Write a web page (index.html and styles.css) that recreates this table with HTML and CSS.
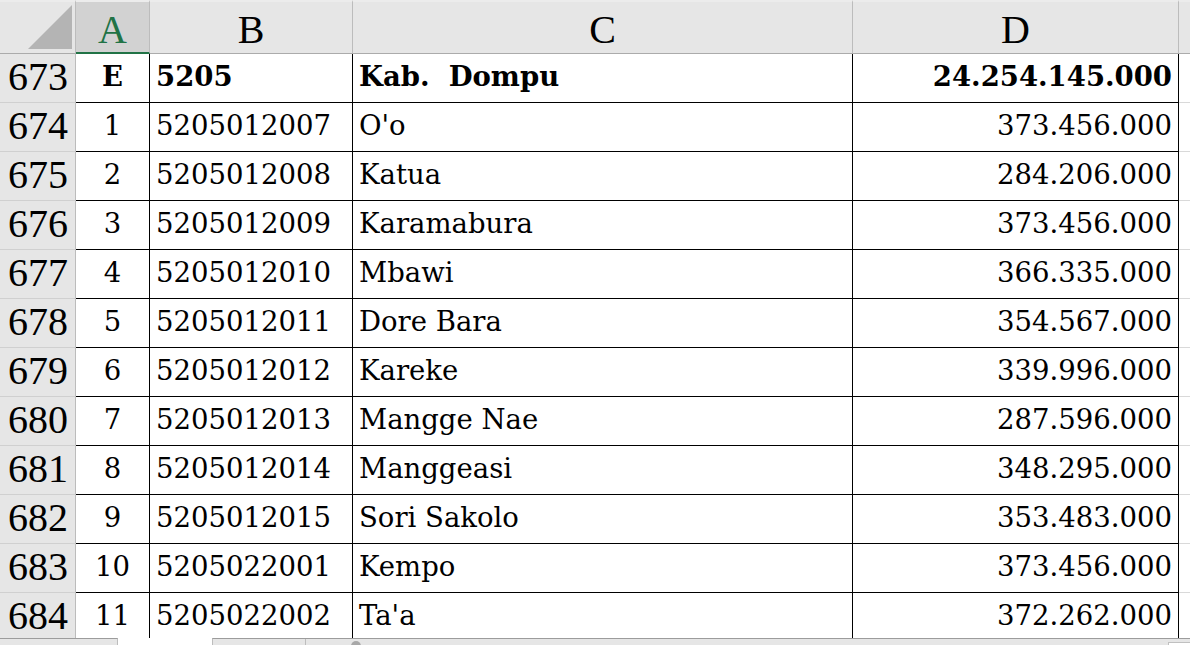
FILE: index.html
```html
<!DOCTYPE html>
<html>
<head>
<meta charset="utf-8">
<link rel="stylesheet" href="styles.css">
</head>
<body>
<div class="sheet">
  <div class="grid">
    <div class="hd corner"><span class="tri"></span></div>
    <div class="hd col sel">A</div>
    <div class="hd col">B</div>
    <div class="hd col">C</div>
    <div class="hd col">D</div>
    <div class="hd col rest"></div>

    <div class="rn">673</div>
    <div class="c ctr b">E</div>
    <div class="c b">5205</div>
    <div class="c b">Kab.&nbsp; Dompu</div>
    <div class="c r b">24.254.145.000</div>
    <div class="c x"></div>

    <div class="rn">674</div><div class="c ctr">1</div><div class="c">5205012007</div><div class="c">O'o</div><div class="c r">373.456.000</div><div class="c x"></div>
    <div class="rn">675</div><div class="c ctr">2</div><div class="c">5205012008</div><div class="c">Katua</div><div class="c r">284.206.000</div><div class="c x"></div>
    <div class="rn">676</div><div class="c ctr">3</div><div class="c">5205012009</div><div class="c">Karamabura</div><div class="c r">373.456.000</div><div class="c x"></div>
    <div class="rn">677</div><div class="c ctr">4</div><div class="c">5205012010</div><div class="c">Mbawi</div><div class="c r">366.335.000</div><div class="c x"></div>
    <div class="rn">678</div><div class="c ctr">5</div><div class="c">5205012011</div><div class="c">Dore Bara</div><div class="c r">354.567.000</div><div class="c x"></div>
    <div class="rn">679</div><div class="c ctr">6</div><div class="c">5205012012</div><div class="c">Kareke</div><div class="c r">339.996.000</div><div class="c x"></div>
    <div class="rn">680</div><div class="c ctr">7</div><div class="c">5205012013</div><div class="c">Mangge Nae</div><div class="c r">287.596.000</div><div class="c x"></div>
    <div class="rn">681</div><div class="c ctr">8</div><div class="c">5205012014</div><div class="c">Manggeasi</div><div class="c r">348.295.000</div><div class="c x"></div>
    <div class="rn">682</div><div class="c ctr">9</div><div class="c">5205012015</div><div class="c">Sori Sakolo</div><div class="c r">353.483.000</div><div class="c x"></div>
    <div class="rn">683</div><div class="c ctr">10</div><div class="c">5205022001</div><div class="c">Kempo</div><div class="c r">373.456.000</div><div class="c x"></div>
    <div class="rn">684</div><div class="c ctr">11</div><div class="c">5205022002</div><div class="c">Ta'a</div><div class="c r">372.262.000</div><div class="c x"></div>
  </div>
  <div class="bar">
    <div class="tabbox first"></div>
    <div class="gap"></div>
    <div class="tabbox second"><span class="div"></span><span class="dot"></span></div>
    <div class="tabbox end"></div>
  </div>
</div>
</body>
</html>
```

FILE: styles.css
```css
* { box-sizing: border-box; }
html, body { margin: 0; padding: 0; background: #fff; }
.sheet {
  width: 1190px;
  height: 645px;
  overflow: hidden;
  display: flex;
  flex-direction: column;
}
.grid {
  height: 638px;
  overflow: hidden;
  display: grid;
  grid-template-columns: 76px 74px 203px 500px 326px 1fr;
  grid-template-rows: 54px repeat(12, 49px);
  font-family: "DejaVu Serif", serif;
  font-size: 27.5px;
  color: #000;
}
.hd {
  background: #e6e6e6;
  border-bottom: 1px solid #ababab;
  border-top: 2px solid #ececec;
  font-family: "Liberation Serif", serif;
  font-size: 40px;
  display: flex;
  align-items: center;
  justify-content: center;
  padding-top: 4px;
  position: relative;
}
.col { border-right: 1px solid #bcbcbc; }
.corner { border-right: 1px solid #bcbcbc; }
.tri {
  position: absolute;
  left: 28px;
  bottom: 4px;
  width: 0;
  height: 0;
  border-left: 44px solid transparent;
  border-bottom: 44px solid #b4b4b4;
}
.sel {
  background: #d2d2d2;
  color: #217346;
  border-bottom: 2px solid #217346;
}
.rest { border-right: none; }
.rn {
  background: #e6e6e6;
  border-right: 1px solid #bcbcbc;
  border-bottom: 1px solid #d0d0d0;
  font-family: "Liberation Serif", serif;
  font-size: 40px;
  display: flex;
  align-items: center;
  justify-content: flex-end;
  padding-right: 7px;
  padding-bottom: 3px;
}
.c {
  border-right: 1px solid #000;
  border-bottom: 1px solid #000;
  display: flex;
  align-items: center;
  padding: 0 6px 5px 6px;
  white-space: nowrap;
}
.ctr { justify-content: center; }
.r { justify-content: flex-end; }
.b { font-weight: bold; }
.x {
  border-right: none;
  border-bottom: 1px solid #d9d9d9;
}
.bar {
  height: 7px;
  display: flex;
  background: #fff;
}
.tabbox {
  background: #e6e6e6;
  border-top: 1px solid #9c9c9c;
  height: 7px;
  position: relative;
}
.first { width: 118px; border-right: 1px solid #bdbdbd; }
.gap { width: 94px; background: #fff; }
.second {
  flex: 1;
  border-left: 1px solid #bdbdbd;
}
.second .div {
  position: absolute;
  left: 92px;
  top: 0;
  width: 1px;
  height: 7px;
  background: #bdbdbd;
}
.second .dot {
  position: absolute;
  left: 138px;
  top: 2px;
  width: 10px;
  height: 10px;
  border-radius: 50%;
  background: #a8a8a8;
}
.end {
  width: 22px;
  border-top: 1px solid #9c9c9c;
}
.end::after {
  content: "";
  position: absolute;
  left: 0;
  top: 3px;
  width: 22px;
  height: 6px;
  background: #fff;
  border: 1px solid #c0c0c0;
}
```
